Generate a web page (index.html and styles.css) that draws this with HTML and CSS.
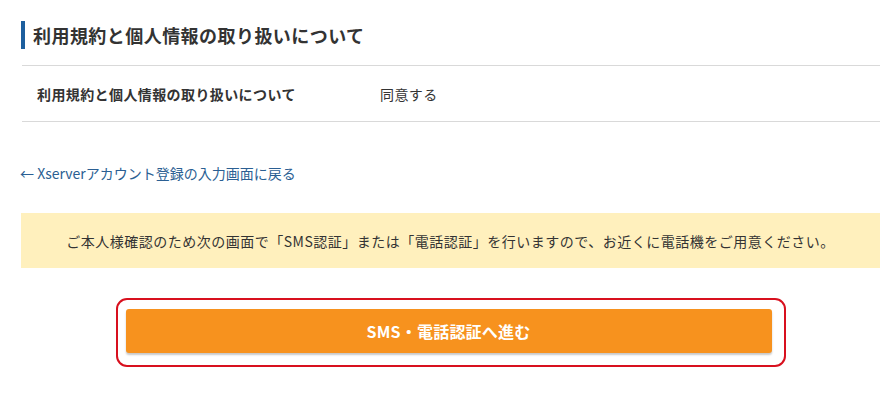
FILE: index.html
```html
<!DOCTYPE html>
<html lang="ja">
<head>
<meta charset="utf-8">
<link rel="stylesheet" href="styles.css">
</head>
<body>
<div class="page">
  <h2 class="section-title">利用規約と個人情報の取り扱いについて</h2>
  <div class="table">
    <div class="row">
      <div class="label">利用規約と個人情報の取り扱いについて</div>
      <div class="value">同意する</div>
    </div>
  </div>
  <a class="back-link" href="#">← Xserverアカウント登録の入力画面に戻る</a>
  <div class="notice">ご本人様確認のため次の画面で「SMS認証」または「電話認証」を行いますので、お近くに電話機をご用意ください。</div>
  <div class="action">
    <div class="highlight">
      <button class="btn">SMS・電話認証へ進む</button>
    </div>
  </div>
</div>
</body>
</html>
```
FILE: styles.css
```css
html, body {
  margin: 0;
  padding: 0;
  background: #fff;
}
body {
  font-family: "Noto Sans CJK JP", "Noto Sans", sans-serif;
  color: #333;
}
.page {
  margin: 0 10px 0 21px;
  padding-top: 21px;
}
.section-title {
  margin: 0;
  border-left: 4px solid #1d5f9e;
  padding-left: 8px;
  height: 28px;
  line-height: 28px;
  font-size: 18px;
  font-weight: 700;
  letter-spacing: 0.45px;
  color: #333;
}
.table {
  margin-top: 16px;
  margin-left: 1px;
  border-top: 1px solid #d9d9d9;
  border-bottom: 1px solid #d9d9d9;
}
.row {
  display: flex;
  height: 55px;
  align-items: center;
}
.label {
  width: 343px;
  padding-left: 15px;
  font-size: 14px;
  font-weight: 700;
  letter-spacing: 0.4px;
  color: #333;
}
.value {
  font-size: 14px;
  letter-spacing: 0.4px;
  color: #333;
}
.back-link {
  display: block;
  margin-top: 41px;
  margin-left: -1px;
  font-size: 14px;
  line-height: 20px;
  color: #2b5f93;
  text-decoration: none;
}
.notice {
  margin-top: 30px;
  height: 55px;
  display: flex;
  align-items: center;
  justify-content: center;
  background: #fff0bd;
  font-size: 14px;
  letter-spacing: 0.5px;
  color: #333;
}
.action {
  margin-top: 30px;
  display: flex;
  justify-content: center;
}
.highlight {
  border: 2px solid #d8101e;
  border-radius: 11px;
  padding: 9px 12px 12px 8px;
}
.btn {
  display: block;
  width: 646px;
  height: 44px;
  border: 0;
  border-radius: 3px;
  background: #f7921e;
  box-shadow: 0 2px 2px rgba(0, 0, 0, 0.22);
  color: #fff;
  font-family: "Noto Sans CJK JP", "Noto Sans", sans-serif;
  font-size: 16px;
  font-weight: 700;
  letter-spacing: 0.2px;
}
```
